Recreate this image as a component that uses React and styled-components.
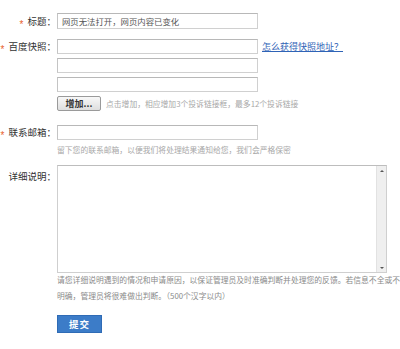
import React from 'react'
import styled, { createGlobalStyle } from 'styled-components'

const GlobalStyle = createGlobalStyle`
  html, body {
    margin: 0;
    padding: 0;
    background: #fff;
  }
  body {
    font-family: "Noto Sans CJK SC", "Liberation Sans", sans-serif;
    color: #333;
  }
`;

const Form = styled.form`
  width: 400px;
  height: 349px;
  padding-top: 13px;
  box-sizing: border-box;
  overflow: hidden;
`;

const Row = styled.div`
  display: flex;
  align-items: flex-start;
  margin-top: ${props => props.gap || 0}px;
`;

const Label = styled.label`
  width: 57px;
  flex-shrink: 0;
  height: ${props => props.h || 16}px;
  line-height: ${props => props.h || 16}px;
  text-align: right;
  font-size: 9.5px;
  color: #333;
  white-space: nowrap;
  padding-right: 1px;
  box-sizing: border-box;
`;

const Star = styled.span`
  display: inline-block;
  color: #e8612c;
  font-size: 10px;
  margin-right: 4px;
  font-family: "Liberation Sans", sans-serif;
  vertical-align: -3px;
`;

const Field = styled.div`
  display: flex;
  flex-direction: column;
  gap: ${props => props.gap || 0}px;
`;

const Line = styled.div`
  display: flex;
  align-items: center;
  gap: ${props => props.gap || 4}px;
`;

const TextInput = styled.input`
  width: 201px;
  height: ${props => props.h || 15}px;
  box-sizing: border-box;
  border: 1px solid #d0d0d0;
  border-top-color: #b8b8b8;
  border-left-color: #c4c4c4;
  padding: 0 4px;
  font-family: "Noto Sans CJK SC", sans-serif;
  font-size: 8.4px;
  color: #555;
  outline: none;
  background: #fff;
`;

const HelpLink = styled.a`
  font-size: 9px;
  color: #2f63b6;
  text-decoration: underline;
  white-space: nowrap;
`;

const AddButton = styled.button`
  width: 44px;
  height: 15px;
  box-sizing: border-box;
  padding: 0;
  border: 1px solid #9a9a9a;
  border-radius: 2px;
  background: linear-gradient(#f8f8f8, #dedede);
  font-family: "Noto Sans CJK SC", sans-serif;
  font-size: 9px;
  font-weight: bold;
  color: #333;
  line-height: 13px;
`;

const Hint = styled.span`
  font-size: 7.8px;
  color: #a8a8a8;
  white-space: nowrap;
  line-height: ${props => props.lh || 12}px;
`;

const TextBox = styled.div`
  width: 330px;
  height: 108px;
  box-sizing: border-box;
  border: 1px solid #cfcfcf;
  border-top-color: #bdbdbd;
  display: flex;
`;

const Area = styled.textarea`
  flex: 1;
  border: none;
  outline: none;
  resize: none;
  padding: 3px;
  font-family: "Noto Sans CJK SC", sans-serif;
  font-size: 9px;
`;

const Scrollbar = styled.div`
  width: 10px;
  background: #efefef;
  border-left: 1px solid #e2e2e2;
  display: flex;
  flex-direction: column;
  justify-content: space-between;
  align-items: center;
  padding: 4px 0 3px;
  box-sizing: border-box;
`;

const Arrow = styled.span`
  width: 0;
  height: 0;
  border-left: 2px solid transparent;
  border-right: 2px solid transparent;
  ${props => props.down
    ? 'border-top: 2px solid #555;'
    : 'border-bottom: 2px solid #555;'}
`;

const Notes = styled.p`
  margin: -1px 0 0;
  width: 346px;
  font-size: 7.8px;
  line-height: 16px;
  color: #8a8a8a;
`;

const Submit = styled.button`
  width: 45px;
  height: 18px;
  margin-top: 11px;
  padding: 0;
  border: 1px solid #2f6bb5;
  background: #3c7cc8;
  color: #fff;
  font-family: "Noto Sans CJK SC", sans-serif;
  font-size: 9.5px;
  font-weight: bold;
  letter-spacing: 1px;
`;

export default function App() {
  return (
    <>
      <GlobalStyle />
      <Form onSubmit={e => e.preventDefault()}>
        <Row>
          <Label h={16}><Star>*</Star>标题：</Label>
          <TextInput h={16} defaultValue="网页无法打开，网页内容已变化" />
        </Row>

        <Row gap={10}>
          <Label h={15}><Star>*</Star>百度快照：</Label>
          <Field gap={4}>
            <Line>
              <TextInput />
              <HelpLink href="#">怎么获得快照地址？</HelpLink>
            </Line>
            <TextInput />
            <TextInput />
            <Line gap={5}>
              <AddButton type="button">增加...</AddButton>
              <Hint>点击增加，相应增加3个投诉链接框，最多12个投诉链接</Hint>
            </Line>
          </Field>
        </Row>

        <Row gap={14}>
          <Label h={15}><Star>*</Star>联系邮箱：</Label>
          <Field>
            <TextInput />
            <Hint lh={19}>留下您的联系邮箱，以便我们将处理结果通知给您，我们会严格保密</Hint>
          </Field>
        </Row>

        <Row gap={6}>
          <Label h={22}>详细说明：</Label>
          <Field>
            <TextBox>
              <Area />
              <Scrollbar>
                <Arrow />
                <Arrow down />
              </Scrollbar>
            </TextBox>
            <Notes>
              请您详细说明遇到的情况和申请原因，以保证管理员及时准确判断并处理您的反馈。若信息不全或不明确，管理员将很难做出判断。（500个汉字以内）
            </Notes>
            <Line>
              <Submit type="submit">提交</Submit>
            </Line>
          </Field>
        </Row>
      </Form>
    </>
  )
}
